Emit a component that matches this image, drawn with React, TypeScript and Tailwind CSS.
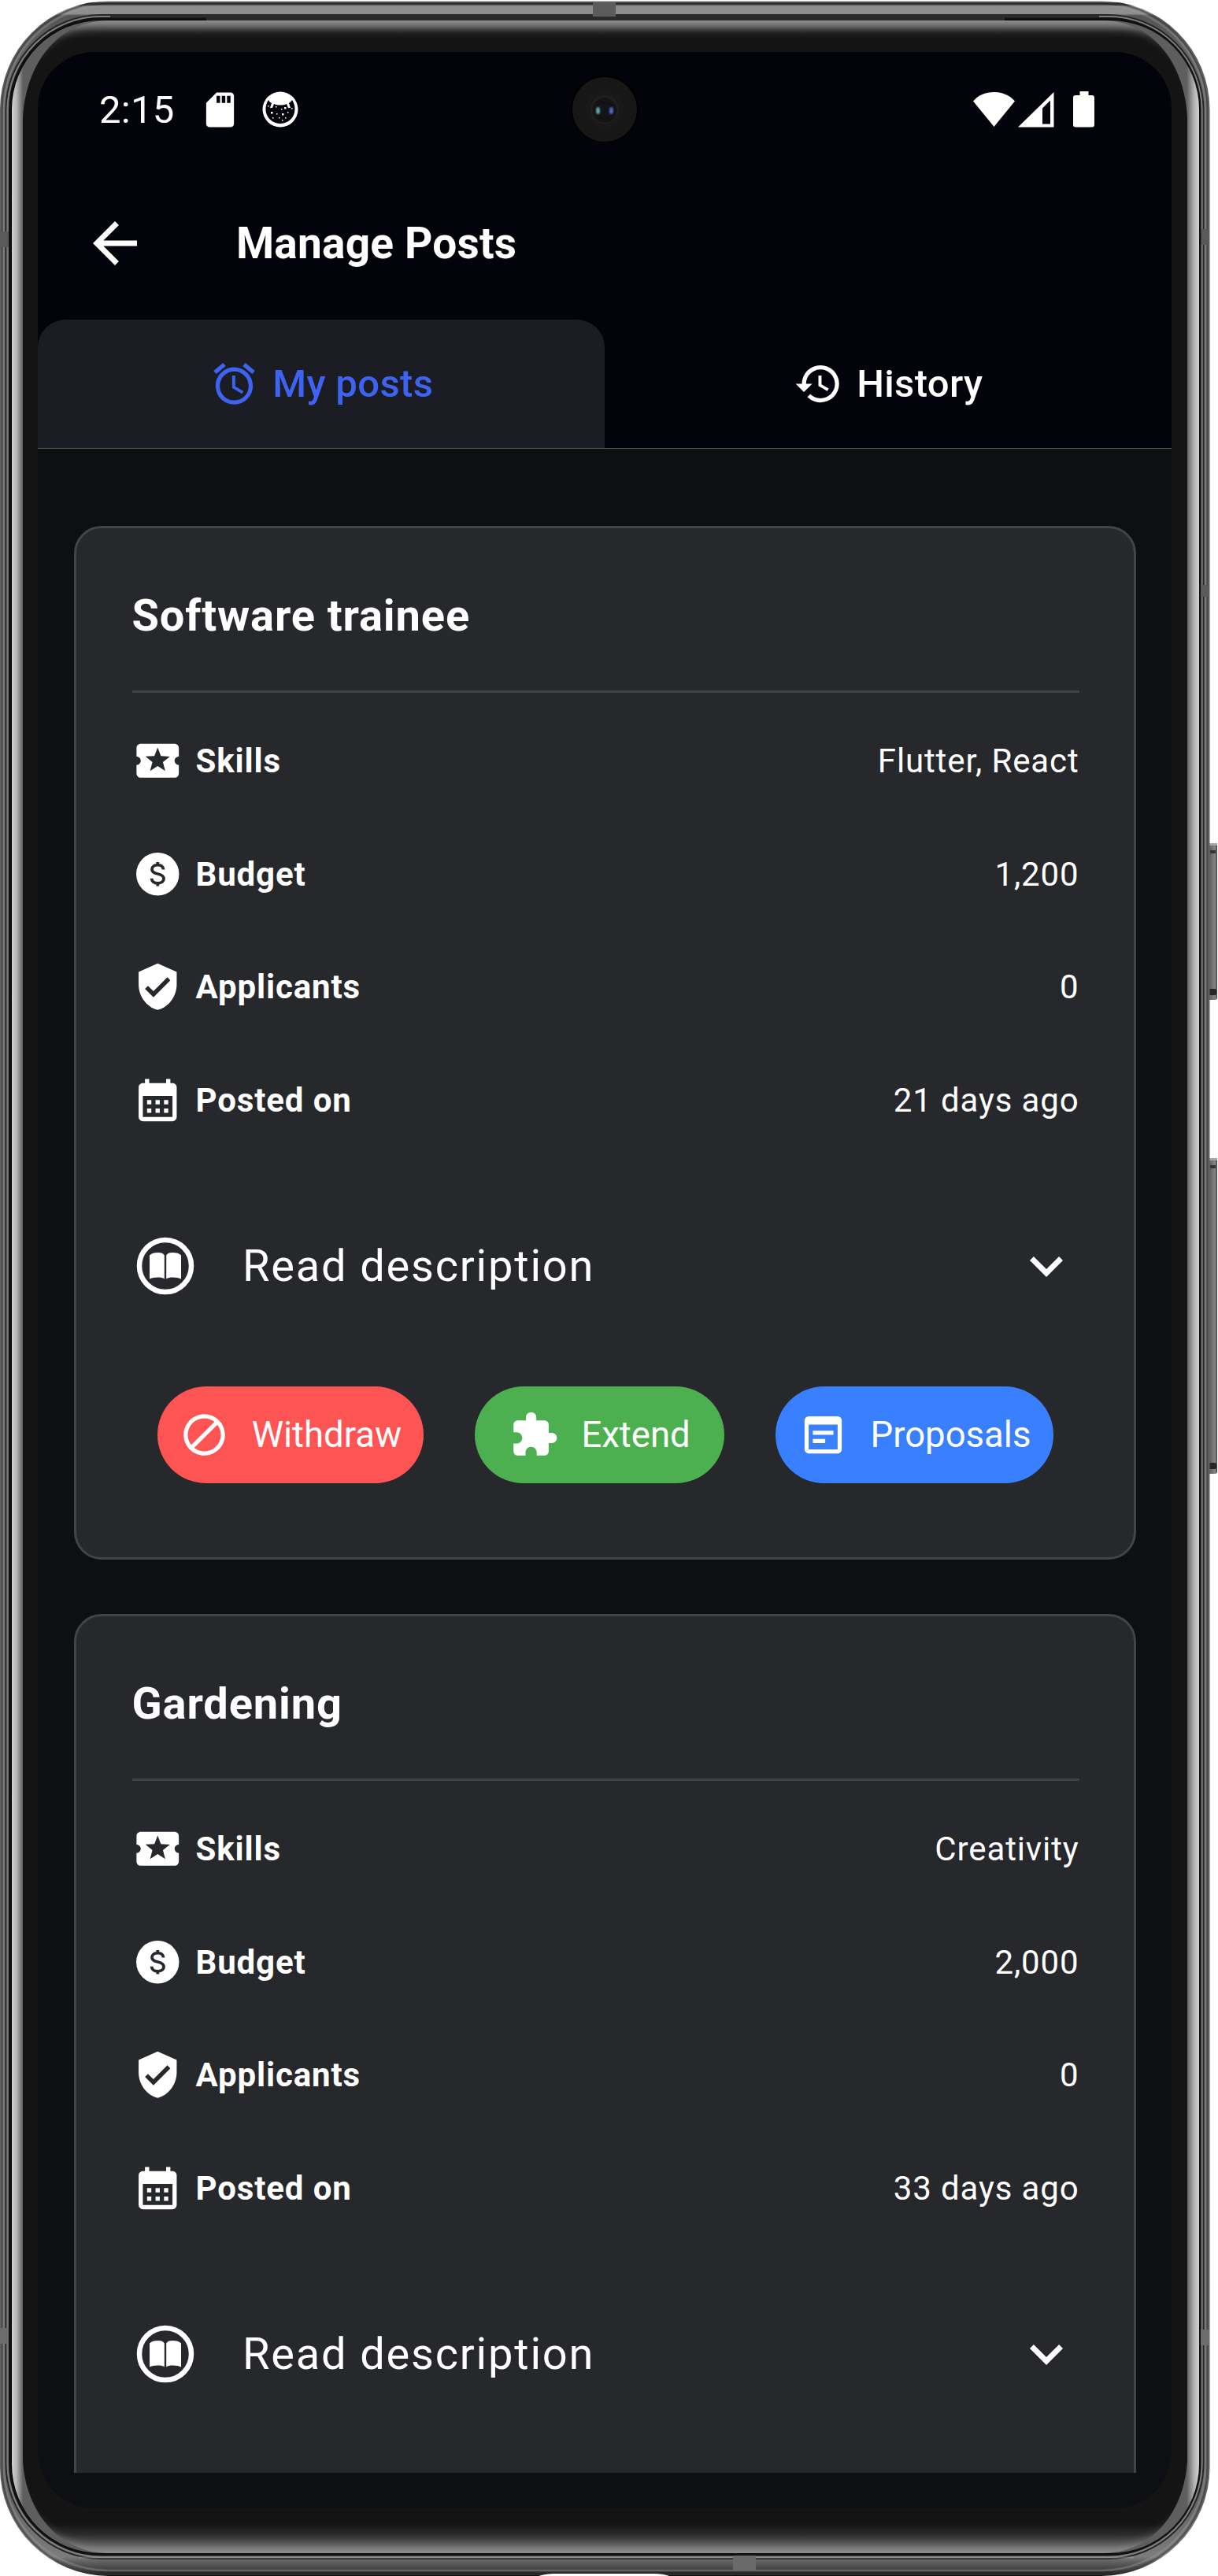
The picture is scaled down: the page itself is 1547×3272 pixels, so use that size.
import type { ReactNode } from "react";
import {
  MdAccessAlarm,
  MdArrowBack,
  MdBlock,
  MdCalendarMonth,
  MdExpandMore,
  MdExtension,
  MdHistory,
  MdLocalActivity,
  MdSdCard,
  MdVerifiedUser,
  MdWysiwyg,
} from "react-icons/md";

type Post = {
  title: string;
  skills: string;
  budget: string;
  applicants: string;
  posted: string;
  actions: boolean;
};

const posts: Post[] = [
  { title: "Software trainee", skills: "Flutter, React", budget: "1,200", applicants: "0", posted: "21 days ago", actions: true },
  { title: "Gardening", skills: "Creativity", budget: "2,000", applicants: "0", posted: "33 days ago", actions: false },
];

/* Metal body, glass edge and side buttons of the handset. */
function DeviceFrame() {
  return (
    <svg className="pointer-events-none absolute inset-0" width="1547" height="3272" viewBox="0 0 1547 3272" fill="none">
      <defs>
        <linearGradient id="body" x1="0" x2="0" y1="0" y2="1">
          <stop offset="0" stopColor="#b8c0b8" />
          <stop offset="0.0005" stopColor="#b8c0b8" />
          <stop offset="0.0008" stopColor="#262626" />
          <stop offset="0.0016" stopColor="#303030" />
          <stop offset="0.0021" stopColor="#8c8c8c" />
          <stop offset="0.005" stopColor="#8f8f8f" />
          <stop offset="0.0058" stopColor="#555" />
          <stop offset="0.02" stopColor="#626262" />
          <stop offset="0.97" stopColor="#626262" />
          <stop offset="0.9925" stopColor="#7c7c7c" />
          <stop offset="0.9945" stopColor="#606060" />
          <stop offset="0.9975" stopColor="#424242" />
          <stop offset="1" stopColor="#0c0c0c" />
        </linearGradient>
        <linearGradient id="glass" gradientUnits="userSpaceOnUse" x1="15" x2="1523" y1="0" y2="0">
          <stop offset="0" stopColor="#d2d2d2" />
          <stop offset="0.004" stopColor="#b4b4b4" />
          <stop offset="0.0095" stopColor="#5e5e5e" />
          <stop offset="0.5" stopColor="#5e5e5e" />
          <stop offset="0.9895" stopColor="#5e5e5e" />
          <stop offset="0.996" stopColor="#b4b4b4" />
          <stop offset="1" stopColor="#d2d2d2" />
        </linearGradient>
        <linearGradient id="bezel" gradientUnits="userSpaceOnUse" x1="0" x2="0" y1="26" y2="3243">
          <stop offset="0" stopColor="#7c7c7c" />
          <stop offset="0.002" stopColor="#565656" />
          <stop offset="0.0045" stopColor="#232323" />
          <stop offset="0.007" stopColor="#141414" />
          <stop offset="0.9885" stopColor="#141414" />
          <stop offset="0.9925" stopColor="#2b2b2b" />
          <stop offset="0.996" stopColor="#505050" />
          <stop offset="1" stopColor="#7c7c7c" />
        </linearGradient>
        <linearGradient id="key" x1="0" x2="1" y1="0" y2="0">
          <stop offset="0" stopColor="#8a8a8a" />
          <stop offset="0.25" stopColor="#606060" />
          <stop offset="0.8" stopColor="#858585" />
          <stop offset="1" stopColor="#3c3c3c" />
        </linearGradient>
        <filter id="soft" x="-5%" y="-5%" width="110%" height="110%">
          <feGaussianBlur stdDeviation="7" />
        </filter>
        <clipPath id="inner">
          <path d="M29 150C32 85 70 26 140 26H1398C1468 26 1505 85 1508 150V3125C1505 3185 1468 3243 1398 3243H140C70 3243 32 3185 29 3125Z" />
        </clipPath>
      </defs>

      {[
        [1071, 199],
        [1471, 401],
      ].map(([y, h]) => (
        <g key={y}>
          <rect x="1533" y={y} width="13" height={h} rx="3" fill="url(#key)" />
          <rect x="1535" y={y} width="11" height="3" fill="#a5a5a5" />
          <rect x="1537" y={y + 9} width="7" height="4" fill="#333" />
          <rect x="1534" y={y + h - 14} width="11" height="8" rx="2" fill="#262626" />
        </g>
      ))}

      <rect x="0" y="1" width="1536.5" height="3271" rx="138" fill="url(#body)" />
      <rect x="2.5" y="3" width="1531" height="3267" rx="136" stroke="#3a3a3a" strokeWidth="2" strokeOpacity="0.6" />
      <rect x="5" y="7" width="1526" height="3258" rx="132" stroke="#9a9a9a" strokeWidth="2.5" strokeOpacity="0.4" />
      <rect x="7.5" y="19" width="1521" height="3231" rx="121" stroke="#262626" strokeWidth="2" />
      <rect x="9.5" y="21" width="1517" height="3227" rx="119" stroke="#7d7d7d" strokeWidth="2" />
      <rect x="12.5" y="23.5" width="1511.5" height="3221.500" rx="116" fill="#050505" stroke="#111" strokeWidth="3" />
      <path d="M140 21H1396" stroke="#2c2c2c" strokeWidth="3" />
      <path d="M262 24.500H1276" stroke="#2a2a2a" strokeWidth="5" />
      <path d="M100 3248.500H1440" stroke="#a0a0a0" strokeWidth="2" strokeOpacity="0.45" />

      <g>
        <rect x="753" y="3" width="29" height="18" fill="#5c5c5c" />
        <rect x="931" y="3246" width="29" height="19" fill="#6a6a6a" />
        <rect x="0" y="294" width="11" height="20" fill="#5a5a5a" />
        <rect x="0" y="2957" width="11" height="20" fill="#6c6c6c" />
        <rect x="1526" y="291" width="10" height="20" fill="#5a5a5a" />
        <rect x="1525" y="743" width="11" height="15" fill="#5a5a5a" />
        <rect x="1525" y="2959" width="11" height="20" fill="#6c6c6c" />
      </g>

      <rect x="15" y="26" width="1508" height="3217" rx="113" fill="url(#glass)" />
      <g clipPath="url(#inner)">
        <rect x="15" y="26" width="1508" height="3217" rx="113" fill="url(#bezel)" />
        <rect x="9" y="25" width="1520" height="3219" rx="118" stroke="#a0a0a0" strokeWidth="9" filter="url(#soft)" />
      </g>
      <rect x="29" y="170" width="19" height="2930" fill="#141414" />
      <rect x="1488" y="170" width="20" height="2930" fill="#141414" />
      <path d="M684 3272C692 3269.500 700 3269 710 3269H830C838 3269 845 3270 850 3272Z" fill="#fff" />
    </svg>
  );
}

function Camera() {
  return (
    <svg className="absolute left-[677px] top-[28px]" width="86" height="90" viewBox="0 0 86 90">
      <defs>
        <radialGradient id="lens">
          <stop offset="0" stopColor="#0d1420" />
          <stop offset="0.55" stopColor="#12161c" />
          <stop offset="1" stopColor="#101010" />
        </radialGradient>
        <filter id="glint">
          <feGaussianBlur stdDeviation="1.200" />
        </filter>
      </defs>
      <circle cx="43" cy="44" r="43" fill="#000" />
      <circle cx="43" cy="45" r="41" fill="#171717" />
      <circle cx="43" cy="45" r="25" fill="#191919" />
      <circle cx="43" cy="45" r="18" fill="#1f1f1f" />
      <circle cx="43" cy="46" r="15.500" fill="#141414" />
      <circle cx="43" cy="46" r="12" fill="url(#lens)" />
      <ellipse cx="34.500" cy="46.500" rx="2.500" ry="4.500" fill="#69a9ac" filter="url(#glint)" />
      <ellipse cx="51.500" cy="46.500" rx="2.500" ry="4.500" fill="#5268cf" filter="url(#glint)" />
    </svg>
  );
}

function CatIcon() {
  return (
    <svg width="46" height="46" viewBox="0 0 46 46">
      <circle cx="23" cy="23" r="22.500" fill="#fff" />
      <path
        d="M8 11C4 17 3.500 24 6 30C9 37 16 41 23 41S37 37 40 30C42.500 24 42 17 38 11C37 13 35 14 34 15L36 21H33L31 16C27 18 19 18 15 16L13 21H10L12 15C10 14 9 13 8 11Z"
        fill="#04040b"
      />
      <g fill="#fff">
        <rect x="28" y="20" width="2.500" height="2.500" />
        <rect x="17" y="19" width="1.500" height="1.500" />
        <rect x="11" y="26" width="2.500" height="2.500" />
        <rect x="18" y="28" width="1.500" height="1.500" />
        <rect x="25" y="28" width="2.500" height="2.500" />
        <rect x="32" y="26" width="1.500" height="1.500" />
        <rect x="7" y="18" width="1.500" height="1.500" />
        <rect x="37" y="21" width="1.500" height="1.500" />
        <rect x="21" y="33" width="1.500" height="1.500" />
        <rect x="13" y="33" width="1.500" height="1.500" />
        <rect x="29" y="33" width="1.500" height="1.500" />
        <rect x="24" y="22" width="1.500" height="1.500" />
        <rect x="25" y="36" width="1.500" height="1.500" />
      </g>
    </svg>
  );
}

function StatusBar() {
  return (
    <div className="relative flex h-[146px] items-center pl-[78px] pr-[96px]">
      <span className="w-[128px] pt-0.5 text-[49px] leading-[60px] tracking-[0.3px]">2:15</span>
      <MdSdCard className="-ml-px size-[53px]" />
      <div className="ml-[27px]">
        <CatIcon />
      </div>
      <Camera />
      <svg className="ml-auto" width="156" height="48" viewBox="0 0 156 48" fill="#fff">
        <path d="M0 13.500C7 5.500 16 2 26.500 2S46 5.500 53 13.500L26.500 46Z" />
        <path fillRule="evenodd" d="M57 46.500L102.500 2V46.500ZM88 42.500H98V12.500L88 22.500Z" />
        <path d="M135.500 1H146.500V6H151Q154 6 154 9V43.500Q154 46.500 151 46.500H130Q127 46.500 127 43.500V9Q127 6 130 6H135.500Z" />
      </svg>
    </div>
  );
}

function BookIcon() {
  return (
    <svg width="84" height="84" viewBox="0 0 84 84" className="shrink-0">
      <circle cx="42" cy="42" r="33" fill="none" stroke="#fff" strokeWidth="6.500" />
      <path
        fill="#fff"
        d="M40.800 28.500C39.500 26 37 25 33 25C28 25 24 26 22 28.500V58.500C26 56.500 37 55.500 40.800 58.500ZM43.200 28.500C44.500 26 47 25 51 25C56 25 60 26 62 28.500V58.500C58 56.500 47 55.500 43.200 58.500Z"
      />
    </svg>
  );
}

function DollarIcon() {
  return (
    <svg width="64.500" height="64.500" viewBox="0 0 64.500 64.500" fill="none">
      <circle cx="32.250" cy="32.250" r="27.200" fill="#fff" />
      <path
        d="M39.500 26.500C39.500 22.800 36.500 20.700 32.400 20.700C28 20.700 25 22.900 25 26.200C25 29.400 27.400 30.900 32.400 32C37.500 33.200 40 34.900 40 38.300C40 41.700 37 43.800 32.400 43.800C27.700 43.800 24.600 41.500 24.600 37.700M32.300 17V21.500M32.300 43V47.500"
        stroke="#27282c"
        strokeWidth="3.800"
      />
    </svg>
  );
}

function Row({ icon, label, value }: { icon: ReactNode; label: string; value: string }) {
  return (
    <div className="flex h-[143.6px] items-center text-[42px] leading-[50px] tracking-[0.875px]">
      <span className="flex w-[81px] pb-0.5 text-[64.5px]">{icon}</span>
      <span className="font-bold">{label}</span>
      <span className="ml-auto">{value}</span>
    </div>
  );
}

const pill = "flex h-[123px] items-center gap-[28.5px] rounded-full text-[45.5px] leading-[54px]";

function PostCard({ post }: { post: Post }) {
  return (
    <article className="h-[1312.5px] shrink-0 rounded-[35px] border-3 border-[#434448] bg-[#27282c] pl-[71px] pr-[69px]">
      <h2 className="flex h-[208.5px] items-center border-b-[3px] border-[#414246] pt-[16px] text-[56px] font-bold tracking-[0.875px]">
        {post.title}
      </h2>
      <div className="pt-[16px]">
        <Row icon={<MdLocalActivity />} label="Skills" value={post.skills} />
        <Row icon={<DollarIcon />} label="Budget" value={post.budget} />
        <Row icon={<MdVerifiedUser />} label="Applicants" value={post.applicants} />
        <Row icon={<MdCalendarMonth />} label="Posted on" value={post.posted} />
      </div>
      <div className="flex h-[278px] items-center pb-px">
        <BookIcon />
        <span className="ml-[56.5px] text-[56px] tracking-[1.8px]">Read description</span>
        <MdExpandMore className="ml-auto size-[84px]" />
      </div>
      {post.actions && (
        <div className="mt-[13.5px] flex justify-around">
          <button className={`${pill} bg-[#ff5454] px-[28px]`}>
            <MdBlock className="size-[63px]" />
            Withdraw
          </button>
          <button className={`${pill} bg-[#4caf50] px-[43.5px]`}>
            <MdExtension className="size-[63px]" />
            Extend
          </button>
          <button className={`${pill} bg-[#3880ff] px-[28.5px]`}>
            <MdWysiwyg className="size-[63px]" />
            Proposals
          </button>
        </div>
      )}
    </article>
  );
}

export default function App() {
  return (
    <div className="relative h-[3272px] w-[1547px] overflow-hidden bg-white pl-[48px] pt-[66px] font-[Roboto,sans-serif] text-white">
      <DeviceFrame />
      <main className="relative flex h-[3120px] w-[1440px] flex-col overflow-hidden rounded-[72px] bg-[#0e0f13]">
        <header className="h-[504px] shrink-0 border-b border-[#56575c] bg-[#03030b]">
          <StatusBar />
          <div className="flex h-[194px] items-center pl-[56px]">
            <MdArrowBack className="size-[84px]" />
            <h1 className="ml-[112px] text-[55px] font-bold tracking-[0.2px]">Manage Posts</h1>
          </div>
          <nav className="flex h-[163px] text-[49px] font-medium tracking-[0.35px]">
            <div className="flex w-[720px] items-center justify-center gap-[17.5px] rounded-t-[35px] bg-[#1b1c24] text-[#3d63f0]">
              <MdAccessAlarm className="size-[63px]" />
              My posts
            </div>
            <div className="flex w-[720px] items-center justify-center gap-[17.5px]">
              <MdHistory className="size-[63px]" />
              History
            </div>
          </nav>
        </header>
        <section className="mx-[45.5px] flex h-[2571px] flex-col gap-[69.5px] overflow-hidden pt-[98px]">
          {posts.map((post) => (
            <PostCard key={post.title} post={post} />
          ))}
        </section>
      </main>
    </div>
  );
}
